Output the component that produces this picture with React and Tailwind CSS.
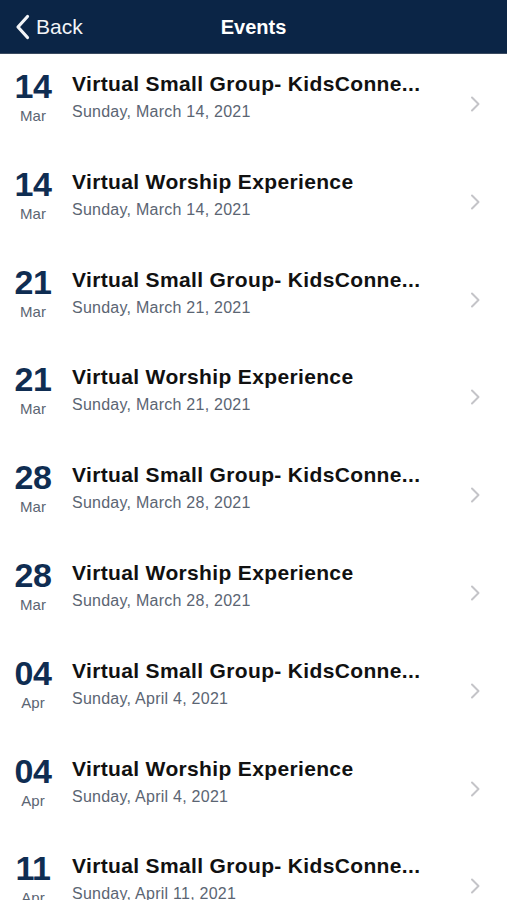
import React from "react";

const events = [
  ["14", "Mar", "Virtual Small Group- KidsConne...", "Sunday, March 14, 2021"],
  ["14", "Mar", "Virtual Worship Experience", "Sunday, March 14, 2021"],
  ["21", "Mar", "Virtual Small Group- KidsConne...", "Sunday, March 21, 2021"],
  ["21", "Mar", "Virtual Worship Experience", "Sunday, March 21, 2021"],
  ["28", "Mar", "Virtual Small Group- KidsConne...", "Sunday, March 28, 2021"],
  ["28", "Mar", "Virtual Worship Experience", "Sunday, March 28, 2021"],
  ["04", "Apr", "Virtual Small Group- KidsConne...", "Sunday, April 4, 2021"],
  ["04", "Apr", "Virtual Worship Experience", "Sunday, April 4, 2021"],
  ["11", "Apr", "Virtual Small Group- KidsConne...", "Sunday, April 11, 2021"],
];

export default function App() {
  return (
    <div className="w-[507px] h-[900px] overflow-hidden bg-white" style={{ fontFamily: "'Liberation Sans', Arial, sans-serif" }}>
      <div className="h-[54px] bg-[#0b2546] flex items-center relative border-b border-[#3a4a60]">
        <div className="flex items-center pl-[15px] text-[#f2f4f7]">
          <svg width="15" height="26" viewBox="0 0 15 26" fill="none">
            <path d="M12.5 2.5 L3 13 L12.5 23.5" stroke="#f2f4f7" strokeWidth="3.2" strokeLinecap="round" strokeLinejoin="round" />
          </svg>
          <span className="ml-[6px] text-[21px]">Back</span>
        </div>
        <div className="absolute left-0 right-0 text-center text-[20px] font-bold text-white pointer-events-none">Events</div>
      </div>
      <div className="flex flex-col">
        {events.map(([d, m, t, s], i) => (
          <div key={i} className="h-[97.8px] flex shrink-0 items-start pt-[15px] relative">
            <div className="w-[66px] flex flex-col items-center">
              <div className="text-[34px] font-bold text-[#0f2d52] leading-[34px] tracking-[-0.5px]">{d}</div>
              <div className="text-[15px] text-[#5b6573] leading-[20px] mt-[3px]">{m}</div>
            </div>
            <div className="ml-[6px] w-[370px] pt-[3px]">
              <div className="text-[21px] font-bold text-[#111] leading-[24px] tracking-[0.35px] whitespace-nowrap">{t}</div>
              <div className="text-[16px] text-[#5b6573] leading-[20px] tracking-[0.25px] mt-[6px]">{s}</div>
            </div>
            <div className="absolute right-[27px] top-[42px]">
              <svg width="10" height="16" viewBox="0 0 10 16" fill="none">
                <path d="M2 1.5 L8.5 8 L2 14.5" stroke="#c4c4c8" strokeWidth="2" strokeLinecap="round" strokeLinejoin="round" />
              </svg>
            </div>
          </div>
        ))}
      </div>
    </div>
  );
}
